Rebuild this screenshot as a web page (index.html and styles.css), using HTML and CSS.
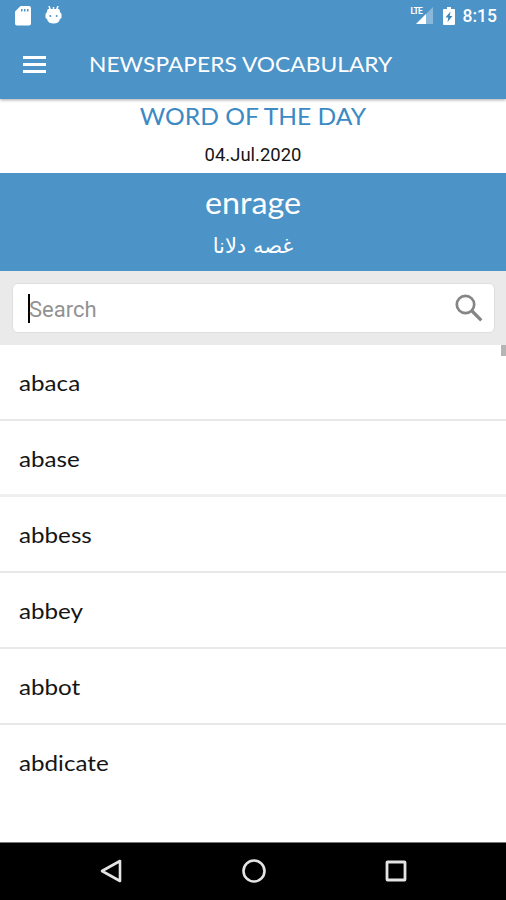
FILE: index.html
```html
<!DOCTYPE html>
<html lang="en">
<head>
<meta charset="utf-8">
<title>Newspapers Vocabulary</title>
<link rel="stylesheet" href="styles.css">
</head>
<body>
<div class="status">
  <svg class="sd" width="16" height="20" viewBox="0 0 16 20"><path fill="#fff" fill-rule="evenodd" d="M5.500 0H14Q16 0 16 2V17.500Q16 19.500 14 19.500H2Q0 19.500 0 17.500V5.500ZM6 3V5.500H7.500V3ZM9 3V5.500H10.500V3ZM12 3V5.500H13.500V3Z"/></svg>
  <svg class="bug" width="17" height="18" viewBox="0 0 17 18"><path d="M4 0L5.500 4M8.500 1V4M13 0L11.500 4" stroke="#fff" stroke-width="1.500"/><path fill="#fff" d="M3 3H14Q15 4 15 6L16.500 8V12L15 13Q14 17.500 8.500 17.500T2 13L.5 12V8L2 6Q2 4 3 3Z"/><circle cx="5.300" cy="10" r="1" fill="#4c93c8"/><circle cx="11.700" cy="10" r="1" fill="#4c93c8"/></svg>
  <span class="grow"></span>
  <span class="signal"><svg width="22" height="19" viewBox="0 0 22 19"><path fill="#fff" fill-opacity=".35" d="M22 1V18H5Z"/><path fill="#fff" d="M15 8V18H5Z"/></svg><span class="lte">LTE</span></span>
  <svg class="battery" width="12" height="18" viewBox="0 0 12 18"><path fill="#fff" d="M4 0H8V2H11Q12 2 12 3V17Q12 18 11 18H1Q0 18 0 17V3Q0 2 1 2H4Z"/><path fill="#3b84ba" d="M7.500 4.500L2.500 10.500H5.300L4.500 15L9.500 9H6.700Z"/></svg>
  <span class="clock">8:15</span>
</div>
<header class="bar">
  <span class="menu"><i></i><i></i><i></i></span>
  <h1>NEWSPAPERS VOCABULARY</h1>
</header>
<section class="day">
  <h2>WORD OF THE DAY</h2>
  <p>04.Jul.2020</p>
</section>
<section class="word">
  <h3>enrage</h3>
  <p lang="ur" dir="rtl">غصه دلانا</p>
</section>
<div class="search">
  <div class="field">
    <span class="caret"></span><span class="hint">Search</span>
    <svg width="28" height="28" viewBox="0 0 28 28" fill="none" stroke="#858585"><circle cx="10.500" cy="10.500" r="8.700" stroke-width="2.700"/><path d="M17 17L26.300 26.300" stroke-width="3.200"/></svg>
  </div>
</div>
<ul class="list">
  <li><span>abaca</span></li>
  <li class="thick"><span>abase</span></li>
  <li><span>abbess</span></li>
  <li><span>abbey</span></li>
  <li><span>abbot</span></li>
  <li><span>abdicate</span></li>
</ul>
<nav>
  <svg width="22" height="24" viewBox="0 0 22 24"><path d="M20 2V22L2 12Z" fill="none" stroke="#e4e4e4" stroke-width="2.600" stroke-linejoin="round"/></svg>
  <svg width="24" height="24" viewBox="0 0 24 24"><circle cx="12" cy="12" r="10.500" fill="none" stroke="#e4e4e4" stroke-width="2.600"/></svg>
  <svg width="22" height="22" viewBox="0 0 22 22"><rect x="2" y="2" width="18" height="18" rx=".5" fill="none" stroke="#e4e4e4" stroke-width="2.800"/></svg>
</nav>
</body>
</html>
```

FILE: styles.css
```css
* { box-sizing: border-box; margin: 0; padding: 0; }
body { width: 506px; height: 900px; overflow: hidden; display: flex; flex-direction: column; background: #fff; font-family: Lato, "Open Sans", sans-serif; color: #151515; }
svg { display: block; flex: none; }
.status { position: relative; z-index: 1; height: 31px; margin-bottom: -1px; flex: none; display: flex; align-items: center; background: #4c93c8; padding: 0 9px 0 15px; color: #fff; }
.status + .bar { clip-path: inset(0 0 -5px 0); }
.bug { margin-left: 14px; margin-top: -2px; }
.grow { flex: 1; }
.signal { position: relative; margin: 0 10px 0 0; }
.lte { position: absolute; left: 0; top: 1px; font: bold 8.500px/8px Roboto, sans-serif; letter-spacing: -0.700px; }
.battery { margin-right: 8px; }
.clock { font: 500 17.500px/30px Roboto, sans-serif; padding-top: 1px; }
.bar { position: relative; height: 69px; flex: none; display: flex; align-items: center; background: #4c93c8; padding-left: 23px; color: #fff; box-shadow: 0 1px 3px rgba(0,0,0,.35); }
.menu { width: 23px; display: grid; gap: 4px; }
.menu i { height: 3px; background: #fff; }
h1 { margin: -1px 0 0 43px; font-size: 21.500px; font-weight: 400; white-space: nowrap; transform: scaleX(1.06); transform-origin: left; }
.day { height: 74px; flex: none; text-align: center; }
h2 { color: #3c8ac4; font-size: 24px; line-height: 33px; font-weight: 400; transform: scaleX(1.025); }
.day p { font: 18px/24px Roboto, sans-serif; padding-top: 11px; transform: scaleX(1.025); }
.word { height: 98px; flex: none; background: #4c93c8; color: #fff; text-align: center; }
h3 { font-size: 30px; line-height: 58px; font-weight: 400; transform: scaleX(1.075); }
.word p { font: 21px/30px "DejaVu Sans", sans-serif; }
.search { height: 74px; flex: none; background: #ebeaea; padding: 12px 11px 12px 12px; }
.field { height: 50px; display: flex; align-items: center; background: #fff; border: 1px solid #dcdfe2; border-radius: 6px; padding: 0 11px 0 15px; }
.field svg { margin: -1px 0 0 auto; }
.caret { width: 2px; height: 29px; background: #000; }
.hint { color: #929292; font: 22px/30px Roboto, sans-serif; padding-top: 3px; margin-left: -1px; }
.list { position: relative; height: 497px; flex: none; list-style: none; }
.list::after { content: ""; position: absolute; right: 0; top: 0; width: 5px; height: 11px; background: #b5b5b5; }
li { height: 76px; border-bottom: 2px solid #e8e8e8; padding-left: 19px; font-size: 21.500px; line-height: 76px; }
li span { display: inline-block; transform: scaleX(1.125); transform-origin: left; }
li.thick { border-bottom: 3px solid #efefef; }
li:last-child { border: 0; }
nav { height: 58px; flex: none; background: #000; border-top: 1px solid #777; display: flex; align-items: center; justify-content: space-between; padding: 0 99px 2px 100px; }
```
